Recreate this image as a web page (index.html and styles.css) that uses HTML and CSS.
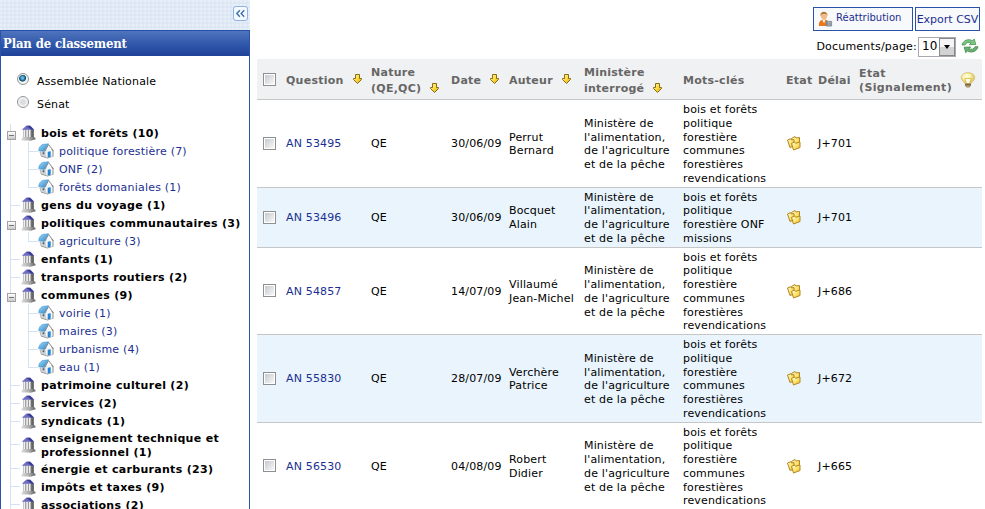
FILE: index.html
```
<!DOCTYPE html>
<html lang="fr">
<head>
<meta charset="utf-8">
<title>Plan de classement</title>
<link rel="stylesheet" href="styles.css">
</head>
<body>
<svg class="defs" aria-hidden="true">
  <defs>
    <linearGradient id="gold" x2="1" y2="1"><stop offset="0" stop-color="#fffbb0"/><stop offset=".5" stop-color="#fbdc3c"/><stop offset="1" stop-color="#e0a010"/></linearGradient>
    <linearGradient id="file" x2="1" y2="1"><stop offset="0" stop-color="#fffde0"/><stop offset=".5" stop-color="#fbe676"/><stop offset="1" stop-color="#e9b820"/></linearGradient>
    <linearGradient id="stone"><stop offset="0" stop-color="#ddd"/><stop offset=".6" stop-color="#aaa"/><stop offset="1" stop-color="#666"/></linearGradient>
    <linearGradient id="roof" x2="1" y2="1"><stop offset="0" stop-color="#a5dcfa"/><stop offset="1" stop-color="#2484cc"/></linearGradient>
    <radialGradient id="glow" cx=".4" cy=".35"><stop offset="0" stop-color="#fffff0"/><stop offset=".6" stop-color="#fbf3a4"/><stop offset="1" stop-color="#e2ce78"/></radialGradient>
  </defs>
  <symbol id="temple" viewBox="0 0 16 16">
    <path d="M11 4l3 1v7l1.500 1v1.500L9 15.500z" fill="#7c7c7c"/>
    <path d="M3 4.500h9v8H3z" fill="#9a9a9e"/>
    <path d="M3.500 5h1.600v8H3.500zM6.300 5h1.600v8H6.300zM9 5h1.400v8H9z" fill="#efefef"/>
    <path d="M11.200 5h2.200v8h-2.200z" fill="#666"/>
    <path d="M3 12h9.500l2.500 1.500-3 2H2L1.300 14z" fill="url(#stone)"/>
    <path d="M1.800 4.800L6.300.7h3.900l4 4.100z" fill="#6c6cc4"/>
    <path d="M6.300.7h3.900l4 4.100h-3z" fill="#3e3e90"/>
  </symbol>
  <symbol id="house" viewBox="0 0 16 16">
    <path d="M1.500 8.500l1.500 5 6.500 2 6-2V7l-1-1z" fill="#8d8d8d"/>
    <path d="M2 7.500l.7 5 5.800 2V6z" fill="#cfd3d6"/>
    <path d="M7.500 8.500L11 3.500l3.500 4.300v5.700l-6 1.300z" fill="#f7f7f7"/>
    <path d="M.6 7.600C1 4.500 2.500 2.500 4.500 1.500L10.500.8 6.500 8.300z" fill="url(#roof)" stroke="#3a93d0" stroke-width=".6"/>
    <path d="M6.800 8.300l3.800-6.800 4.800 6.300" fill="none" stroke="#8a8a8a" stroke-width="1"/>
    <path d="M4.700 9.300h1.600v1.900H4.700z" fill="#555"/>
    <path d="M9.700 8.700l3-.5v5.500l-3 .8z" fill="#2186d6"/>
  </symbol>
  <symbol id="arrow" viewBox="0 0 9 10">
    <path d="M2.500.5h4v4h2v1l-4 4-4-4v-1h2z" fill="url(#gold)" stroke="#8a6a18"/>
  </symbol>
  <symbol id="folders" viewBox="0 0 16 16">
    <path d="M5.500 3.500L9 1.500l1 1.500 3.500-.5v8L8 12z" fill="url(#file)" stroke="#b5851c"/>
    <path d="M1.500 5l3-1.300 1 1.300L8 4.500v6.500l-4 1.500z" fill="url(#file)" stroke="#b5851c"/>
    <path d="M5.500 8.300l3-1.300 1.200 1.300 4.300-1.300v5.500l-6.500 2.500z" fill="url(#file)" stroke="#b5851c"/>
  </symbol>
  <symbol id="bulb" viewBox="0 0 16 16">
    <path d="M8 .7C3.500.7 1.300 3.200 1.300 5.700S4 9.500 5 11.500h6c1-2 3.700-3.300 3.700-5.800S12.500.7 8 .7z" fill="url(#glow)" stroke="#cdbb6c" stroke-width=".8"/>
    <path d="M4.800 6.500h6.400L9.500 11.500h-3z" fill="#fffce0" stroke="#d5ae30" stroke-width=".7"/>
    <path d="M5 11.300h6v2.500L9.500 15.500h-3L5 13.800z" fill="#a9946a"/>
    <path d="M5 12.700h6" stroke="#5d4d30" stroke-width=".8"/>
  </symbol>
  <symbol id="reload" viewBox="0 0 18 16">
    <path d="M1 7C1.800 2.500 7 .3 11.500 2.600L13.300 1l1.500 5.500-6.500.2 1.700-1.700C7.500 3.800 5 4.500 4 7z" fill="#7cc684" stroke="#3f8a49" stroke-width=".7"/>
    <path d="M17 8.700c-.8 4.500-6 6.700-10.500 4.400l-1.800 1.600L3.200 9.200l6.500-.2L8 10.700c2.500 1.200 5 .5 6-2z" fill="#68b271" stroke="#357c40" stroke-width=".7"/>
  </symbol>
  <symbol id="person" viewBox="0 0 16 16">
    <path d="M1 15.500c-.5-4 1-6.500 5-7 4 0 6 2 6 7z" fill="#e8791e"/>
    <path d="M4.500 8.500l2 4 1.500-4z" fill="#fff"/>
    <path d="M2.700 3.500C3-.5 9.500-.5 9.900 3.500c0 3-1.500 5.500-3.400 5.500S2.700 6.500 2.700 3.500z" fill="#f0bd86"/>
    <path d="M2.600 4.500C2.100-1 10.200-1.200 10.200 4.500L8.700 2.400 4.300 2.700z" fill="#b07a35"/>
    <path d="M9 10.500h5.500v5H9z" fill="#c3cad4" stroke="#6b7686" stroke-width=".8"/>
    <path d="M10 11.500h1v3.500h-1zM12.300 11.500h1v3.500h-1z" fill="#5b6878"/>
  </symbol>
</svg>
<div class="app">
  <aside class="side">
    <div class="strip"><button class="collapse" aria-label="Replier"><svg viewBox="0 0 14 14"><path d="M6.300 3.500L3 7l3.300 3.500M11 3.500L7.700 7l3.300 3.500" fill="none" stroke="#3d6fab" stroke-width="1.500"/></svg></button></div>
    <section class="panel">
      <h1>Plan de classement</h1>
      <div class="choices">
        <label><span class="radio on"></span>Assemblée Nationale</label>
        <label><span class="radio"></span>Sénat</label>
      </div>
      <ul class="tree" id="tree"></ul>
    </section>
  </aside>
  <main class="main">
    <div class="actions">
      <button class="btn assign"><svg><use href="#person"/></svg>Réattribution</button>
      <button class="btn export">Export CSV</button>
    </div>
    <div class="pager"><span>Documents/page:</span><span class="select"><span>10</span><i></i></span><svg class="reload"><use href="#reload"/></svg></div>
    <div class="table" id="table">
      <div class="row head">
        <span><i class="check"></i></span>
        <span class="sort">Question<svg><use href="#arrow"/></svg></span>
        <span class="sort two">Nature<br>(QE,QC)<svg><use href="#arrow"/></svg></span>
        <span class="sort">Date<svg><use href="#arrow"/></svg></span>
        <span class="sort">Auteur<svg><use href="#arrow"/></svg></span>
        <span class="sort two">Ministère<br>interrogé<svg><use href="#arrow"/></svg></span>
        <span>Mots-clés</span>
        <span>Etat</span>
        <span>Délai</span>
        <span class="signal">Etat<br>(Signalement)</span>
        <span><svg class="icon bulb"><use href="#bulb"/></svg></span>
      </div>
    </div>
  </main>
</div>
<script src="app.js"></script>
</body>
</html>
```
FILE: styles.css
```
*, *::before { box-sizing: border-box; }
body { margin: 0; font: 11px/13.75px "DejaVu Sans", sans-serif; letter-spacing: .16px; color: #000; background: #fff; overflow: hidden; }
.defs { position: absolute; width: 0; height: 0; }
button { font: inherit; margin: 0; }
.app { display: flex; height: 509px; overflow: hidden; }

.side { width: 250px; display: flex; flex-direction: column; flex: none; }
.strip {
  height: 30px; flex: none; display: flex; justify-content: flex-end; padding: 6px 2px 0 0;
  background-color: #e3ebf5;
  background-image: repeating-linear-gradient(90deg, transparent 0 2px, rgba(214,227,243,.45) 2px 4px), repeating-linear-gradient(#e9eff7 0 2px, #dfe9f4 2px 4px);
}
.collapse { width: 15px; height: 15px; padding: 0; display: flex; border: 1px solid #8db2e3; border-radius: 3px; background: #f4f9ff; }
.collapse svg { width: 13px; height: 13px; }
.panel { flex: 1; min-height: 0; overflow: hidden; border: solid #2a52ad; border-width: 0 1px; }
h1 {
  margin: 0; height: 26px; padding: 0 2px; border-top: 1px solid #2450a8; color: #fff;
  background: linear-gradient(#5074bd, #2c54a8 60%, #204298);
  font: bold 13px/25px "DejaVu Serif Condensed", "DejaVu Serif", serif; letter-spacing: -.15px; white-space: nowrap;
}
.choices { padding: 14px 0 0 16px; height: 68px; }
.choices label { display: flex; align-items: center; height: 23px; gap: 8px; }
.radio { width: 12px; height: 12px; margin-top: -5px; border: 1px solid #8f9498; border-radius: 50%; background: radial-gradient(#ddd 30%, #fff 75%); box-shadow: inset 0 0 0 1px #f5f5f5; }
.radio.on { background: radial-gradient(circle at 45% 40%, #5fc7ee 0 10%, #12466b 38%, #f4f4f4 50%); }

.tree, .tree ul { list-style: none; margin: 0; padding: 0; }
.tree { margin-left: 9px; border-left: 1px solid #d3e2f5; }
.node { display: flex; align-items: center; min-height: 18px; padding: 1px 0; font-weight: bold; letter-spacing: .3px; }
.node::before { content: ""; width: 9px; height: 1px; background: #d3e2f5; flex: none; }
.node svg { width: 16px; height: 16px; flex: none; }
.node span { margin: 1px 0 -1px 5px; white-space: pre; }
.parent::before { width: 9px; height: 9px; margin: 4px 4px 0 -4px; border: 1px solid #a2a2a2; background: linear-gradient(#777, #777) center / 5px 1px no-repeat, linear-gradient(#fff, #c9c9c9); }
.tree ul { margin-left: 17px; }
.leaf { font-weight: normal; letter-spacing: .2px; color: #1b2f90; background: linear-gradient(#d3e2f5, #d3e2f5) 0 0 / 1px 100% no-repeat; }
.leaf:last-child { background-size: 1px 9px; }
.leaf::before { width: 10px; }

.main { flex: 1; padding: 7px 3px 0 7px; }
.actions { display: flex; justify-content: flex-end; gap: 2px; height: 24px; margin-right: 2px; }
.btn { height: 24px; padding: 0; display: flex; align-items: center; justify-content: center; border: 1px solid #2a52ad; background: #f8f9fb; color: #1b2f90; white-space: nowrap; letter-spacing: 0; }
.assign { width: 100px; font-size: 10px; justify-content: flex-start; padding: 0 0 2px 4px; gap: 3px; }
.assign svg { width: 15px; height: 16px; margin-top: 2px; }
.export { width: 65px; padding-top: 1px; }
.pager { display: flex; justify-content: flex-end; align-items: center; height: 28px; padding: 3px 3px 0 0; letter-spacing: .2px; }
.pager > span:first-child { padding-top: 1px; }
.select { width: 38px; height: 20px; margin: 0 5px 0 1px; padding-left: 3px; display: flex; align-items: center; border: 1px solid #aaa6b2; font-size: 12px; letter-spacing: 0; }
.select i { width: 16px; height: 18px; margin-left: auto; display: flex; align-items: center; justify-content: center; border: 1px solid #888; background: linear-gradient(#f5f5f5 50%, #d2d2d2 50%); }
.select i::before { content: ""; border: solid transparent; border-width: 4px 3.500px 0; border-top-color: #000; }
.reload { width: 18px; height: 16px; margin-top: -2px; }

.row {
  display: grid; align-items: center; width: 725px; padding: 3px 0 1px; border-bottom: 1px solid #c6c6c6;
  grid-template-columns: 29px 85px 80px 58px 75px 99px 103px 32px 41px 101px 22px;
}
.row > span { white-space: nowrap; }
.row > span:first-child { padding: 0 0 2px 6px; }
.row:nth-child(odd):not(.head) { background: #e9f4fd; }
.head { height: 41px; padding-top: 4px; background: #f0f1f2; color: #666; font-weight: bold; letter-spacing: .25px; }
.check { display: block; width: 13px; height: 13px; border: 1px solid #8e8f8f; background: linear-gradient(135deg, #c5c9cf, #f8f8f8) center / 9px 9px no-repeat #fff; }
.sort svg { width: 9px; height: 10px; margin-left: 9px; vertical-align: 0; }
.two { line-height: 15.500px; }
.two svg { vertical-align: -1px; }
.signal { letter-spacing: .38px; }
.link { color: #1b2f90; }
.icon { display: block; width: 16px; height: 16px; margin-top: -2px; }
```
FILE: app.js
```
const tree = [
  ["bois et forêts (10)", ["politique forestière (7)", "ONF (2)", "forêts domaniales (1)"]],
  ["gens du voyage (1)"],
  ["politiques communautaires (3)", ["agriculture (3)"]],
  ["enfants (1)"],
  ["transports routiers (2)"],
  ["communes (9)", ["voirie (1)", "maires (3)", "urbanisme (4)", "eau (1)"]],
  ["patrimoine culturel (2)"],
  ["services (2)"],
  ["syndicats (1)"],
  ["enseignement technique et\nprofessionnel (1)"],
  ["énergie et carburants (23)"],
  ["impôts et taxes (9)"],
  ["associations (2)"]
];
const use = (id, cls = "") => `<svg class="${cls}"><use href="#${id}"/></svg>`;
document.getElementById("tree").innerHTML = tree.map(([name, kids]) =>
  `<li><div class="node${kids ? " parent" : ""}">${use("temple")}<span>${name}</span></div>` +
  (kids ? `<ul>${kids.map(k => `<li class="node leaf">${use("house")}<span>${k}</span></li>`).join("")}</ul>` : "") + "</li>"
).join("");

const communes = "bois et forêts<br>politique<br>forestière<br>communes<br>forestières<br>revendications";
const rows = [
  ["AN 53495", "30/06/09", "Perrut<br>Bernard", communes, "J+701"],
  ["AN 53496", "30/06/09", "Bocquet<br>Alain", "bois et forêts<br>politique<br>forestière ONF<br>missions", "J+701"],
  ["AN 54857", "14/07/09", "Villaumé<br>Jean-Michel", communes, "J+686"],
  ["AN 55830", "28/07/09", "Verchère<br>Patrice", communes, "J+672"],
  ["AN 56530", "04/08/09", "Robert<br>Didier", communes, "J+665"]
];
document.getElementById("table").insertAdjacentHTML("beforeend", rows.map(([q, date, author, words, delay]) =>
  `<div class="row"><span><i class="check"></i></span><span class="link">${q}</span><span>QE</span><span>${date}</span><span>${author}</span>` +
  `<span>Ministère de<br>l'alimentation,<br>de l'agriculture<br>et de la pêche</span><span>${words}</span>` +
  `<span>${use("folders", "icon")}</span><span>${delay}</span><span></span><span></span></div>`
).join(""));
```
